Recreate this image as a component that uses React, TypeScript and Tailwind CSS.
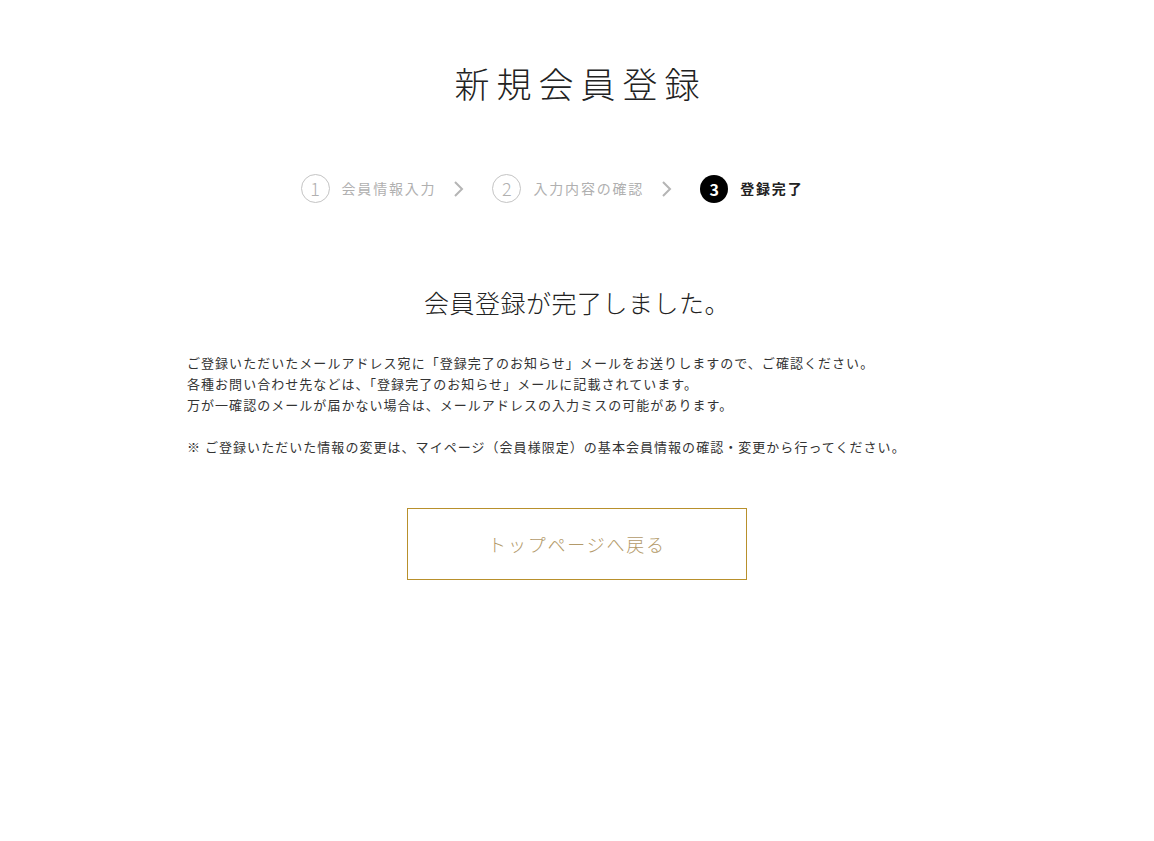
const font = "font-['Noto_Sans_CJK_JP','Noto_Sans',sans-serif]";

function Chevron() {
  return (
    <svg width="12" height="18" viewBox="0 0 12 18" className="ml-[17px] mr-[27px]" aria-hidden>
      <polyline points="2,2 9,9 2,16" fill="none" stroke="#b5b5b5" strokeWidth="2" />
    </svg>
  );
}

function Step({ n, label, active }: { n: number; label: string; active?: boolean }) {
  return (
    <div className="flex items-center">
      {active ? (
        <span className="flex h-[28px] w-[28px] items-center justify-center rounded-full bg-black text-[16px] font-bold text-white">
          {n}
        </span>
      ) : (
        <span className="flex h-[29px] w-[29px] items-center justify-center rounded-full border border-[#c4c4c4] text-[18px] font-light text-[#b0b0b0]">
          {n}
        </span>
      )}
      <span
        className={
          active
            ? "ml-[12px] text-[14px] font-bold tracking-[0.13em] text-[#222]"
            : "ml-[12px] text-[14px] tracking-[0.13em] text-[#b0b0b0]"
        }
      >
        {label}
      </span>
    </div>
  );
}

export default function App() {
  return (
    <div className={`min-h-[841px] bg-white ${font} text-[#333]`}>
      <div className="pt-[57px] text-center">
        <h1 className="pl-[0.2em] text-[35px] font-light leading-[52px] tracking-[0.2em] text-[#222]">新規会員登録</h1>
      </div>

      <div className="mt-[65px] flex items-center justify-center pr-[50px]">
        <Step n={1} label="会員情報入力" />
        <Chevron />
        <Step n={2} label="入力内容の確認" />
        <Chevron />
        <Step n={3} label="登録完了" active />
      </div>

      <h2 className="mt-[81px] text-center text-[25px] font-light leading-[36px] tracking-[0.02em] text-[#222]">
        会員登録が完了しました。
      </h2>

      <div className="mx-auto mt-[32px] w-[780px] text-[13px] leading-[21px] tracking-[0.08em] text-[#333]">
        <p>ご登録いただいたメールアドレス宛に「登録完了のお知らせ」メールをお送りしますので、ご確認ください。</p>
        <p>各種お問い合わせ先などは、「登録完了のお知らせ」メールに記載されています。</p>
        <p>万が一確認のメールが届かない場合は、メールアドレスの入力ミスの可能があります。</p>
        <p className="mt-[21px]">※ ご登録いただいた情報の変更は、マイページ（会員様限定）の基本会員情報の確認・変更から行ってください。</p>
      </div>

      <div className="mt-[51px] flex justify-center">
        <button className="flex h-[72px] w-[340px] items-center justify-center border border-[#b8902c] bg-white text-[18px] font-light tracking-[0.1em] text-[#b39a6a]">
          トップページへ戻る
        </button>
      </div>
    </div>
  );
}
